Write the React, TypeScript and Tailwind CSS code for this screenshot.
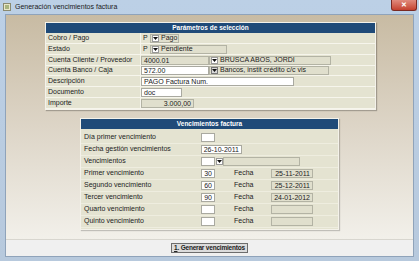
import React from 'react'

const Tri = () => (
  <svg width="5" height="3" viewBox="0 0 5 3">
    <path d="M0 0h5L2.5 3z" fill="#111" />
  </svg>
)

// small drop-down arrow button
function DropBtn({ dark }: { dark?: boolean }) {
  return (
    <span
      className={`flex h-[7px] w-[7px] shrink-0 items-center justify-center border ${
        dark ? 'border-[#777] bg-[#d8d8d8]' : 'border-[#999] bg-white'
      }`}
    >
      <Tri />
    </span>
  )
}

function Field({
  w,
  white,
  right,
  children,
}: {
  w: number
  white?: boolean
  right?: boolean
  children?: React.ReactNode
}) {
  return (
    <div
      style={{ width: w }}
      className={`flex h-[9px] shrink-0 items-center overflow-hidden whitespace-nowrap border px-[2px] leading-none ${
        white ? 'border-[#a9a9a0] bg-white' : 'border-[#b3b3a4] bg-[#e0dfcd]'
      } ${right ? 'justify-end' : ''}`}
    >
      {children}
    </div>
  )
}

function Row1({ label, h, children }: { label: string; h: number; children?: React.ReactNode }) {
  return (
    <div style={{ height: h }} className="flex border-b border-[#f6f5ec]">
      <div className="flex w-[95px] shrink-0 items-center border-r border-[#f6f5ec] pl-[2px]">{label}</div>
      <div className="flex flex-1 items-center">{children}</div>
    </div>
  )
}

function Row2({ label, children }: { label: string; children?: React.ReactNode }) {
  return (
    <div className="flex h-[12px] items-center border-b border-[#eeeddf]">
      <div className="w-[120px] shrink-0 pl-[3px]">{label}</div>
      <div className="flex flex-1 items-center">{children}</div>
    </div>
  )
}

function Venc({ label, days, date }: { label: string; days?: string; date?: string }) {
  return (
    <Row2 label={label}>
      <Field w={14} white right>
        {days}
      </Field>
      <span className="ml-[19px] w-[37px]">Fecha</span>
      <Field w={42} right>
        {date}
      </Field>
    </Row2>
  )
}

export default function App() {
  return (
    <div className="flex h-[261px] w-[419px] flex-col bg-gradient-to-b from-[#bcd0e6] to-[#b7c9dd] font-['Liberation_Sans',Arial,sans-serif] text-[7px] text-[#222]">
      {/* title bar */}
      <div className="relative flex h-[14px] shrink-0 items-center pl-[3px]">
        <div className="flex h-[8px] w-[8px] items-center justify-center border border-[#8a8a70] bg-[#e9e6c8]">
          <div className="h-[4px] w-[4px] bg-[#a9b47e]" />
        </div>
        <span className="ml-[4px] text-[7px] text-[#1b1b1b]">Generación vencimientos factura</span>
        <div className="absolute right-[2px] top-0 flex h-[11px] w-[26px] items-center justify-center rounded-b-[3px] border border-t-0 border-[#7a2a22] bg-gradient-to-b from-[#e08a7c] to-[#c4402e] text-[7px] font-bold text-white">
          ✕
        </div>
      </div>

      {/* window body */}
      <div className="mx-[5px] flex flex-1 flex-col border border-[#8fa3ba] bg-[#f0f0f0]">
        <div className="flex flex-1 flex-col bg-gradient-to-b from-[#c8bba3] via-[#ddd5c7] to-[#f2f0ea]">
          {/* Parámetros de selección */}
          <div className="ml-[39px] mt-[7px] w-[331px] border border-[#f4f2ea] shadow-[1px_1px_1px_rgba(0,0,0,0.25)]">
            <div className="flex h-[10px] items-center justify-center bg-[#1f4a78] text-[6.5px] font-bold text-white">
              Parámetros de selección
            </div>
            <div className="bg-[#e4e3d1]">
              <Row1 label="Cobro / Pago" h={11}>
                <span className="ml-[2px] w-[7px]">P</span>
                <div className="flex h-[9px] w-[29px] items-center gap-[2px] border border-[#b3b3a4] bg-[#e0dfcd] px-[1px]">
                  <DropBtn />
                  <span>Pago</span>
                </div>
              </Row1>
              <Row1 label="Estado" h={11}>
                <span className="ml-[2px] w-[7px]">P</span>
                <div className="flex h-[9px] w-[77px] items-center gap-[2px] border border-[#b3b3a4] bg-[#e0dfcd] px-[1px]">
                  <DropBtn />
                  <span>Pendiente</span>
                </div>
              </Row1>
              <Row1 label="Cuenta Cliente / Proveedor" h={11}>
                <Field w={68}>4000.01</Field>
                <div className="flex h-[9px] w-[122px] items-center gap-[2px] border border-[#b3b3a4] bg-[#e0dfcd] px-[1px]">
                  <DropBtn />
                  <span>BRUSCA ABOS, JORDI</span>
                </div>
              </Row1>
              <Row1 label="Cuenta Banco / Caja" h={10}>
                <Field w={68} white>
                  572.00
                </Field>
                <div className="flex h-[9px] w-[120px] items-center gap-[2px] border border-[#b3b3a4] bg-[#e0dfcd] px-[1px]">
                  <DropBtn dark />
                  <span>Bancos, instit crédito c/c vis</span>
                </div>
              </Row1>
              <Row1 label="Descripción" h={11}>
                <Field w={153} white>
                  PAGO Factura Num.
                </Field>
              </Row1>
              <Row1 label="Documento" h={11}>
                <Field w={41} white>
                  doc
                </Field>
              </Row1>
              <Row1 label="Importe" h={11}>
                <Field w={53} right>
                  3.000,00
                </Field>
              </Row1>
            </div>
          </div>

          {/* Vencimientos factura */}
          <div className="ml-[74px] mt-[8px] w-[259px] border border-[#f4f2ea] shadow-[1px_1px_1px_rgba(0,0,0,0.2)]">
            <div className="flex h-[10px] items-center justify-center bg-[#1f4a78] text-[6.5px] font-bold text-white">
              Vencimientos factura
            </div>
            <div className="bg-[#e4e3d1] pb-[1px] pt-[3px]">
              <Row2 label="Día primer vencimiento">
                <Field w={14} white />
              </Row2>
              <Row2 label="Fecha gestión vencimientos">
                <Field w={41} white right>
                  26-10-2011
                </Field>
              </Row2>
              <Row2 label="Vencimientos">
                <Field w={14} white />
                <span className="ml-[1px]">
                  <DropBtn />
                </span>
                <Field w={77} />
              </Row2>
              <Venc label="Primer vencimiento" days="30" date="25-11-2011" />
              <Venc label="Segundo vencimiento" days="60" date="25-12-2011" />
              <Venc label="Tercer vencimiento" days="90" date="24-01-2012" />
              <Venc label="Quarto vencimiento" />
              <Venc label="Quinto vencimiento" />
            </div>
          </div>
        </div>

        {/* button bar */}
        <div className="flex h-[17px] shrink-0 items-center justify-center border-t border-[#d8d6cf] bg-[#f0f0f0]">
          <div className="flex h-[10px] items-center justify-center whitespace-nowrap border border-[#6d6d6d] bg-[#dcdcdc] px-[2px] text-[6.5px] font-bold tracking-[-0.2px]">
            <span className="underline">1</span>. Generar vencimientos
          </div>
        </div>
      </div>
      <div className="h-[4px] shrink-0" />
    </div>
  )
}
